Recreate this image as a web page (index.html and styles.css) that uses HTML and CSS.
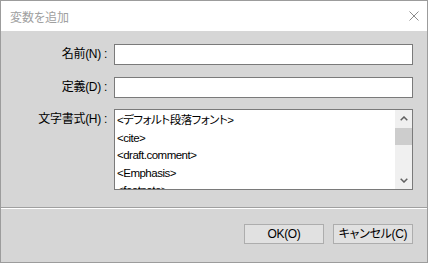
FILE: index.html
```html
<!DOCTYPE html>
<html lang="ja">
<head>
    <meta charset="UTF-8">
    <title>変数を追加</title>
    <link rel="stylesheet" href="styles.css">
</head>
<body>
    <div class="dialog">
        <div class="titlebar">
            <span class="title">変数を追加</span>
            <svg class="close" width="10" height="10" viewBox="0 0 10 10">
                <path d="M0.5 0.5L9.5 9.5M9.5 0.5L0.5 9.5" stroke="#8c8c8c" stroke-width="1" fill="none"/>
            </svg>
        </div>
        <div class="body">
            <div class="form">
                <label class="lbl">名前(N) :</label>
                <input class="field" type="text">
                <label class="lbl">定義(D) :</label>
                <input class="field" type="text">
                <label class="lbl lbl-top">文字書式(H) :</label>
                <div class="listbox">
                    <ul class="items">
                        <li>&lt;デフォルト段落フォント&gt;</li>
                        <li>&lt;cite&gt;</li>
                        <li>&lt;draft.comment&gt;</li>
                        <li>&lt;Emphasis&gt;</li>
                        <li>&lt;footnote&gt;</li>
                    </ul>
                    <div class="scrollbar">
                        <div class="arrow">
                            <svg width="8" height="5" viewBox="0 0 8 5"><path d="M0.7 4.3L4 1L7.3 4.3" stroke="#606060" stroke-width="1.5" fill="none"/></svg>
                        </div>
                        <div class="track"><div class="thumb"></div></div>
                        <div class="arrow">
                            <svg width="8" height="5" viewBox="0 0 8 5"><path d="M0.7 0.7L4 4L7.3 0.7" stroke="#606060" stroke-width="1.5" fill="none"/></svg>
                        </div>
                    </div>
                </div>
            </div>
            <div class="sep"></div>
            <div class="buttons">
                <button class="btn">OK(O)</button>
                <button class="btn">キャンセル(C)</button>
            </div>
        </div>
    </div>
</body>
</html>
```
FILE: styles.css
```css
* {
    margin: 0;
    padding: 0;
    box-sizing: border-box;
}
ul,li{
    list-style: none;
}
body{
    background: #fff;
    font-family: "Liberation Sans", "Noto Sans CJK JP", sans-serif;
    font-size: 12px;
    font-feature-settings: "palt";
    color: #000;
}
.dialog{
    width: 428px;
    height: 263px;
    border: 1px solid #9c9c9c;
    display: flex;
    flex-direction: column;
}
.titlebar{
    height: 30px;
    background: #fff;
    display: flex;
    align-items: center;
    justify-content: space-between;
    padding: 0 8px 0 9px;
}
.title{
    color: #a0a0a0;
    font-size: 12px;
}
.close{
    display: block;
    margin-top: -1px;
}
.body{
    flex: 1;
    background: #d6d6d6;
    padding-top: 13px;
}
.form{
    display: grid;
    grid-template-columns: 106px 299px;
    column-gap: 7px;
    row-gap: 12px;
}
.lbl{
    text-align: right;
    align-self: center;
    line-height: 17px;
    letter-spacing: -0.3px;
}
.lbl-top{
    align-self: start;
    padding-top: 2px;
    margin-top: -1px;
}
.field{
    height: 21px;
    border: 1px solid #7a7a7a;
    background: #fff;
    outline: none;
}
.listbox{
    height: 81px;
    margin-top: -1px;
    border: 1px solid #7a7a7a;
    background: #fff;
    display: flex;
}
.items{
    flex: 1;
    overflow: hidden;
    padding: 2px 0 0 2px;
    font-size: 11.5px;
    letter-spacing: -0.5px;
}
.items li{
    line-height: 17.5px;
    white-space: nowrap;
}
.scrollbar{
    width: 17px;
    background: #f0f0f0;
    display: flex;
    flex-direction: column;
}
.arrow{
    height: 17px;
    display: flex;
    align-items: center;
    justify-content: center;
}
.arrow svg{
    display: block;
}
.track{
    flex: 1;
    padding-top: 1px;
}
.thumb{
    height: 17px;
    background: #cdcdcd;
}
.sep{
    margin-top: 17px;
    border-top: 1px solid #a0a0a0;
    border-bottom: 1px solid #fff;
}
.buttons{
    display: flex;
    justify-content: flex-end;
    gap: 9px;
    padding: 15px 14px 0 0;
}
.btn{
    width: 80px;
    height: 20px;
    border: 1px solid #adadad;
    background: #e1e1e1;
    font-family: "Liberation Sans", "Noto Sans CJK JP", sans-serif;
    font-size: 12px;
    font-feature-settings: "palt";
    letter-spacing: -0.3px;
    color: #000;
    line-height: 17px;
}
```
